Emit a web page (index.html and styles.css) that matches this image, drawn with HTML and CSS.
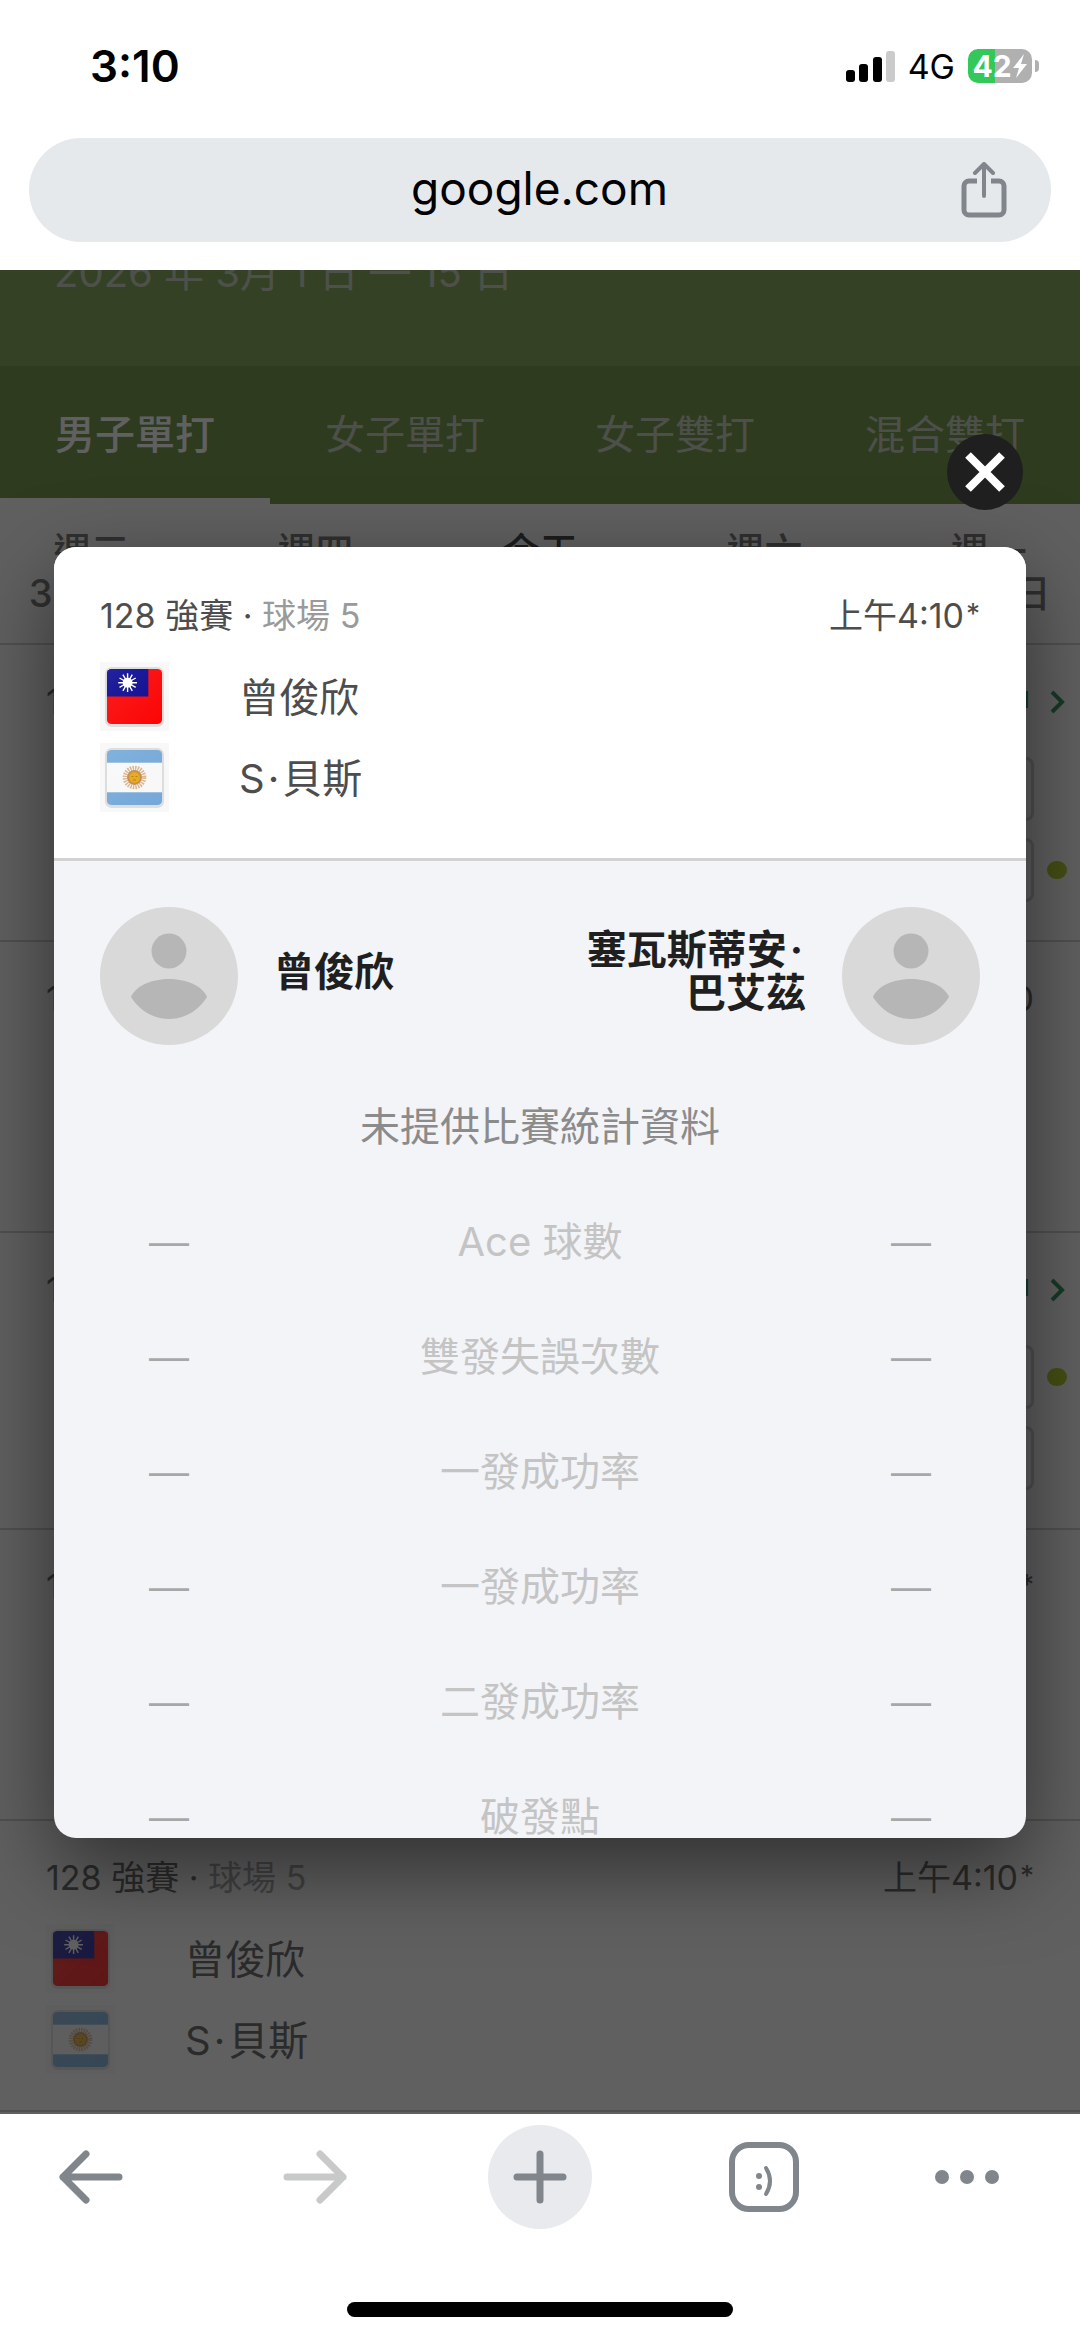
FILE: index.html
```html
<!DOCTYPE html>
<html lang="zh-Hant">
<head>
<meta charset="utf-8">
<meta name="viewport" content="width=device-width, initial-scale=1">
<title>google.com</title>
<link rel="stylesheet" href="styles.css">
</head>
<body>
<svg class="sprite" aria-hidden="true">
  <defs>
    <linearGradient id="gloss" x1="0" y1="0" x2="1" y2="1">
      <stop offset="0" stop-color="#fff" stop-opacity=".1"/>
      <stop offset="1" stop-color="#fff" stop-opacity="0"/>
    </linearGradient>
    <clipPath id="flag-shape"><rect x="7" y="7" width="56" height="56" rx="5"/></clipPath>
    <symbol id="flag-tw" viewBox="0 0 70 70">
      <rect width="70" height="70" fill="#f8f8f8"/>
      <rect x="5" y="5" width="60" height="61" rx="7" fill="#dedede"/>
      <g clip-path="url(#flag-shape)">
        <rect x="7" y="7" width="56" height="56" fill="#fb0505"/>
        <rect x="7" y="7" width="42" height="28" fill="#0a0a92"/>
        <circle cx="28" cy="21" r="5" fill="#fff"/>
        <g stroke="#fff" stroke-width="1.4">
          <path d="M28 11.500v19M18.500 21h19M23.250 12.800l9.500 16.400M19.800 16.250l16.400 9.500M32.750 12.800l-9.500 16.400M36.200 16.250l-16.400 9.500"/>
        </g>
        <rect x="7" y="7" width="56" height="56" fill="url(#gloss)"/>
      </g>
    </symbol>
    <symbol id="flag-ar" viewBox="0 0 70 70">
      <rect width="70" height="70" fill="#f8f8f8"/>
      <rect x="5" y="5" width="60" height="61" rx="7" fill="#dedede"/>
      <g clip-path="url(#flag-shape)">
        <rect x="7" y="7" width="56" height="56" fill="#74a8d8"/>
        <rect x="7" y="20" width="56" height="30" fill="#f8f8f8"/>
        <circle cx="35" cy="35" r="9.500" fill="none" stroke="#d9b48c" stroke-width="5" stroke-dasharray="1.500 1"/>
        <circle cx="35" cy="35" r="7.500" fill="#c08a4e"/>
        <circle cx="35" cy="35" r="5.500" fill="#e8a713"/>
        <path d="M32 34h2M36 34h2M33.500 37.500h3" stroke="#b77a16" stroke-width="1"/>
        <rect x="7" y="7" width="56" height="56" fill="url(#gloss)"/>
      </g>
    </symbol>
    <symbol id="avatar" viewBox="0 0 138 138">
      <circle cx="69" cy="69" r="69" fill="#d9d9d9"/>
      <circle cx="69" cy="44" r="17.500" fill="#b6b6b6"/>
      <path d="M31 90C36 78 53 72 69 72s33 6 38 18C99 103 85 112 69 112S39 103 31 90z" fill="#b6b6b6"/>
    </symbol>
    <symbol id="chevron" viewBox="0 0 16 24"><path d="M3 2l10 10L3 22" fill="none" stroke="#0b8043" stroke-width="4"/></symbol>
  </defs>
</svg>

<div class="browser">
  <header class="browser-top">
    <div class="status-bar">
      <time class="clock">3:10</time>
      <div class="status-icons">
        <svg class="signal" viewBox="0 0 49 32" aria-hidden="true">
          <rect x="0" y="20" width="9" height="12" rx="3"/>
          <rect x="13" y="14" width="9" height="18" rx="3"/>
          <rect x="27" y="7" width="9" height="25" rx="3"/>
          <rect x="40" y="1" width="9" height="31" rx="3" fill="#cbcbcb"/>
        </svg>
        <span class="network">4G</span>
        <div class="battery">
          <span class="battery-level">42</span>
          <svg class="bolt" viewBox="0 0 16 26" aria-hidden="true"><path d="M12 1L1 15h6L4 25 15 11H9z" fill="#fff"/></svg>
        </div>
      </div>
    </div>
    <div class="address-bar">
      <button class="address" type="button">google.com</button>
      <button class="share" type="button" aria-label="分享">
        <svg viewBox="0 0 48 56" fill="none" stroke="#80868b" stroke-width="5" stroke-linejoin="round"><path d="M17 19H9a5 5 0 0 0-5 5v24a5 5 0 0 0 5 5h30a5 5 0 0 0 5-5V24a5 5 0 0 0-5-5h-8"/><path d="M24 34V3M15 11l9-9 9 9" stroke-width="4" stroke-linecap="round"/></svg>
      </button>
    </div>
  </header>

  <main class="view">
    <div class="page">
      <div class="banner"><p class="banner-dates">2026 年 3月 1 日 — 15 日</p></div>
      <nav class="tabs">
        <a class="tab tab-active" href="#ms">男子單打</a>
        <a class="tab" href="#ws">女子單打</a>
        <a class="tab" href="#wd">女子雙打</a>
        <a class="tab" href="#xd">混合雙打</a>
      </nav>
      <div class="days">
        <a class="day" href="#d1"><span>週三</span><span>3月4日</span></a>
        <a class="day" href="#d2"><span>週四</span></a>
        <a class="day day-today" href="#d3"><span>今天</span></a>
        <a class="day" href="#d4"><span>週六</span></a>
        <a class="day" href="#d5"><span>週一</span><span>3月9日</span></a>
      </div>

      <section class="match match-live">
        <div class="match-head"><p>128 強賽</p><p class="live">進行中 <svg class="chevron"><use href="#chevron"/></svg></p></div>
        <div class="score-row"><span class="score"></span><span class="serve"></span></div>
        <div class="score-row"><span class="score"></span><span class="serve serving"></span></div>
      </section>
      <section class="match">
        <div class="match-head"><p>128 強賽</p><p>上午3:10</p></div>
      </section>
      <section class="match match-live">
        <div class="match-head"><p>128 強賽</p><p class="live">進行中 <svg class="chevron"><use href="#chevron"/></svg></p></div>
        <div class="score-row"><span class="score"></span><span class="serve serving"></span></div>
        <div class="score-row"><span class="score"></span><span class="serve"></span></div>
      </section>
      <section class="match">
        <div class="match-head"><p>128 強賽</p><p>上午4:10<span class="star">*</span></p></div>
      </section>
      <section class="match">
        <div class="match-head"><p>128 強賽 · <span class="court">球場 5</span></p><p>上午4:10<span class="star">*</span></p></div>
        <div class="team"><svg class="flag"><use href="#flag-tw"/></svg><span class="team-name">曾俊欣</span></div>
        <div class="team"><svg class="flag"><use href="#flag-ar"/></svg><span class="team-name">S<span class="dot">·</span>貝斯</span></div>
      </section>
    </div>

    <div class="scrim"></div>

    <div class="dialog" role="dialog" aria-label="曾俊欣">
      <div class="dialog-head">
        <div class="match-head"><p>128 強賽 · <span class="court">球場 5</span></p><p>上午4:10<span class="star">*</span></p></div>
        <div class="team"><svg class="flag"><use href="#flag-tw"/></svg><span class="team-name">曾俊欣</span></div>
        <div class="team"><svg class="flag"><use href="#flag-ar"/></svg><span class="team-name">S<span class="dot">·</span>貝斯</span></div>
      </div>
      <div class="dialog-body">
        <div class="players">
          <svg class="avatar"><use href="#avatar"/></svg>
          <h2 class="player">曾俊欣</h2>
          <h2 class="player player-right">塞瓦斯蒂安<span class="dot">·</span><br>巴艾茲</h2>
          <svg class="avatar"><use href="#avatar"/></svg>
        </div>
        <p class="notice">未提供比賽統計資料</p>
        <table class="stats">
          <tr><td>—</td><th scope="row">Ace 球數</th><td>—</td></tr>
          <tr><td>—</td><th scope="row">雙發失誤次數</th><td>—</td></tr>
          <tr><td>—</td><th scope="row">一發成功率</th><td>—</td></tr>
          <tr><td>—</td><th scope="row">一發成功率</th><td>—</td></tr>
          <tr><td>—</td><th scope="row">二發成功率</th><td>—</td></tr>
          <tr><td>—</td><th scope="row">破發點</th><td>—</td></tr>
        </table>
      </div>
    </div>
    <button class="close" type="button" aria-label="關閉">
      <svg viewBox="0 0 76 76"><path d="M21 21l34 34M55 21L21 55" stroke="#fff" stroke-width="8"/></svg>
    </button>
  </main>

  <footer class="browser-bottom">
    <nav class="toolbar">
      <button type="button" aria-label="返回"><svg width="70" height="64" viewBox="0 0 70 64" fill="none" stroke="#80868b" stroke-width="7" stroke-linecap="round" stroke-linejoin="round"><path d="M63 32H7M30 9L7 32l23 23"/></svg></button>
      <button type="button" aria-label="前進"><svg width="70" height="64" viewBox="0 0 70 64" fill="none" stroke="#c8c9c9" stroke-width="7" stroke-linecap="round" stroke-linejoin="round"><path d="M7 32h56M40 9l23 23-23 23"/></svg></button>
      <button type="button" class="new-tab" aria-label="新分頁"><svg width="60" height="60" viewBox="0 0 60 60" fill="none" stroke="#80868b" stroke-width="7" stroke-linecap="round"><path d="M7 30h46M30 7v46"/></svg></button>
      <button type="button" aria-label="分頁"><svg width="70" height="70" viewBox="0 0 70 70" fill="none" stroke="#80868b"><rect x="3" y="3" width="64" height="64" rx="17" stroke-width="6"/><circle cx="30" cy="34" r="3" fill="#80868b" stroke="none"/><circle cx="30" cy="45" r="3" fill="#80868b" stroke="none"/><path d="M37 26q8 13 0 26" stroke-width="4" stroke-linecap="round"/></svg></button>
      <button type="button" aria-label="更多"><svg width="66" height="16" viewBox="0 0 66 16" fill="#80868b"><circle cx="8" cy="8" r="7"/><circle cx="33" cy="8" r="7"/><circle cx="58" cy="8" r="7"/></svg></button>
    </nav>
    <div class="home-indicator"></div>
  </footer>
</div>
</body>
</html>
```
FILE: styles.css
```css
* { box-sizing: border-box; }

body {
  margin: 0;
  background: #fff;
  color: #4d4d4d;
  font-family: Inter, "Noto Sans CJK TC", sans-serif;
  font-size: 34px;
}

p, h2 { margin: 0; }
a { color: inherit; text-decoration: none; }
svg { display: block; }

button {
  display: flex;
  align-items: center;
  justify-content: center;
  padding: 0;
  border: 0;
  background: none;
  color: inherit;
  font: inherit;
}

.sprite { position: absolute; width: 0; height: 0; }

.browser {
  display: flex;
  flex-direction: column;
  min-height: 100vh;
}

/* Status bar and address bar */
.browser-top { height: 270px; }

.status-bar {
  display: flex;
  align-items: center;
  justify-content: space-between;
  height: 138px;
  padding: 0 48px 6px 90px;
  color: #000;
}

.clock { font-size: 44px; font-weight: 600; }

.status-icons { display: flex; align-items: center; gap: 13px; }
.signal { width: 49px; height: 32px; }
.network { font-size: 34px; }

.battery {
  position: relative;
  display: flex;
  align-items: center;
  justify-content: center;
  width: 64px;
  height: 34px;
  border-radius: 10px;
  background: linear-gradient(90deg, #34c759 42%, #b0b0b0 42%);
  color: #fff;
  font-size: 30px;
  font-weight: 700;
}

.battery::after {
  content: "";
  position: absolute;
  right: -7px;
  width: 4px;
  height: 12px;
  border-radius: 0 4px 4px 0;
  background: #b0b0b0;
}

.bolt { width: 16px; height: 26px; }

.address-bar {
  display: flex;
  align-items: center;
  height: 104px;
  margin: 0 29px;
  padding-right: 43px;
  border-radius: 52px;
  background: #e6e9ec;
}

.address {
  flex: 1;
  height: 100%;
  padding: 0 0 4px 90px;
  color: #000;
  font-size: 46px;
}

.share svg { width: 48px; height: 56px; }

/* Tournament page */
.view {
  position: relative;
  flex: 1;
  overflow: hidden;
}

.banner {
  display: flow-root;
  height: 96px;
  background: #6e9838;
  color: #c2cbb6;
  font-size: 40px;
  line-height: 50px;
}

.banner-dates { margin-top: -22px; padding-left: 54px; }

.tabs {
  display: grid;
  grid-template-columns: repeat(4, 1fr);
  height: 138px;
  background: #588326;
  color: #bfc8b5;
  font-size: 40px;
  line-height: 138px;
  text-align: center;
}

.tab-active {
  box-shadow: inset 0 -6px 0 #fff;
  color: #fff;
  font-weight: 500;
}

.days {
  display: grid;
  grid-template-columns: repeat(5, 1fr);
  height: 141px;
  margin: 0 -21px;
  padding-top: 26px;
  border-bottom: 2px solid #c8c8c8;
  color: #5f5f5f;
  font-size: 38px;
  font-weight: 500;
  line-height: 42px;
  text-align: center;
}

.day span { display: block; }
.day-today { color: #1f1f1f; }

.match {
  height: 291px;
  padding: 33px 46px 0;
  border-bottom: 2px solid #c8c8c8;
}

.match-live { height: 297px; }

.match-head {
  display: flex;
  justify-content: space-between;
  margin-bottom: 16px;
  line-height: 48px;
}

.court { color: #9a9a9a; }
.star { margin-left: 2px; font-size: 28px; line-height: 1; vertical-align: 4px; }

.live {
  display: flex;
  gap: 18px;
  margin-right: -31px;
  color: #0b8043;
  font-weight: 500;
}

.chevron { width: 16px; height: 24px; margin-top: 12px; }

.team {
  display: flex;
  align-items: center;
  gap: 70px;
  height: 81px;
  font-size: 40px;
}

.team-name { padding-bottom: 4px; }
.dot { margin: 0 3px; }

.flag { width: 69px; height: 69px; }

.score-row {
  display: flex;
  align-items: center;
  justify-content: flex-end;
  gap: 13px;
  height: 81px;
  margin-right: -33px;
}

.match-live .match-head { margin-bottom: 22px; }

.score {
  width: 64px;
  height: 64px;
  border: 3px solid #c8c8c8;
  border-radius: 8px;
}

.serve { width: 20px; height: 18px; border-radius: 9px; }
.serving { background: #a4c400; }

.scrim {
  position: absolute;
  inset: 0;
  background: rgba(28, 28, 28, 0.7);
}

/* Match dialog */
.dialog {
  position: absolute;
  inset: 277px 54px 276px;
  overflow: hidden;
  border-radius: 22px;
  background: #f3f4f7;
  box-shadow: 0 30px 84px rgba(0, 0, 0, 0.5);
}

.dialog-head {
  padding: 45px 46px 40px;
  border-bottom: 3px solid #d2d2d2;
  background: #fff;
}

.dialog-body { padding: 46px 46px 0; }

.players {
  display: flex;
  align-items: center;
  gap: 36px;
  margin-bottom: 24px;
}

.avatar { flex: none; width: 138px; height: 138px; }

.player {
  flex: 1;
  padding-bottom: 10px;
  color: #1f1f1f;
  font-size: 40px;
  font-weight: 700;
  line-height: 43px;
}

.player-right { text-align: right; }

.notice {
  color: #8b8b8b;
  font-size: 40px;
  line-height: 115px;
  text-align: center;
}

.stats {
  width: 100%;
  border-collapse: collapse;
  table-layout: fixed;
  color: #c4c4c5;
  font-size: 40px;
  line-height: 115px;
  text-align: center;
}

.stats th { padding: 0; font-weight: 400; }

.stats td {
  width: 138px;
  padding: 0;
  color: #a6a7a9;
  font-family: "Liberation Sans", sans-serif;
  vertical-align: top;
}

.close {
  position: absolute;
  top: 164px;
  right: 57px;
  width: 76px;
  height: 76px;
  border-radius: 50%;
  background: #1f1f1f;
}

.close svg { width: 76px; height: 76px; }

/* Bottom toolbar */
.browser-bottom {
  display: flex;
  flex-direction: column;
  align-items: center;
  justify-content: space-between;
  height: 225px;
  padding: 11px 0 22px;
  overflow: hidden;
}

.toolbar {
  display: grid;
  grid-template-columns: repeat(4, 224fr) 182fr;
  align-items: center;
  justify-items: center;
  align-self: stretch;
  margin: 0 22px 0 -21px;
}

.new-tab {
  width: 104px;
  height: 104px;
  border-radius: 50%;
  background: #e8eaed;
}

.home-indicator {
  width: 386px;
  height: 15px;
  border-radius: 8px;
  background: #000;
}
```
